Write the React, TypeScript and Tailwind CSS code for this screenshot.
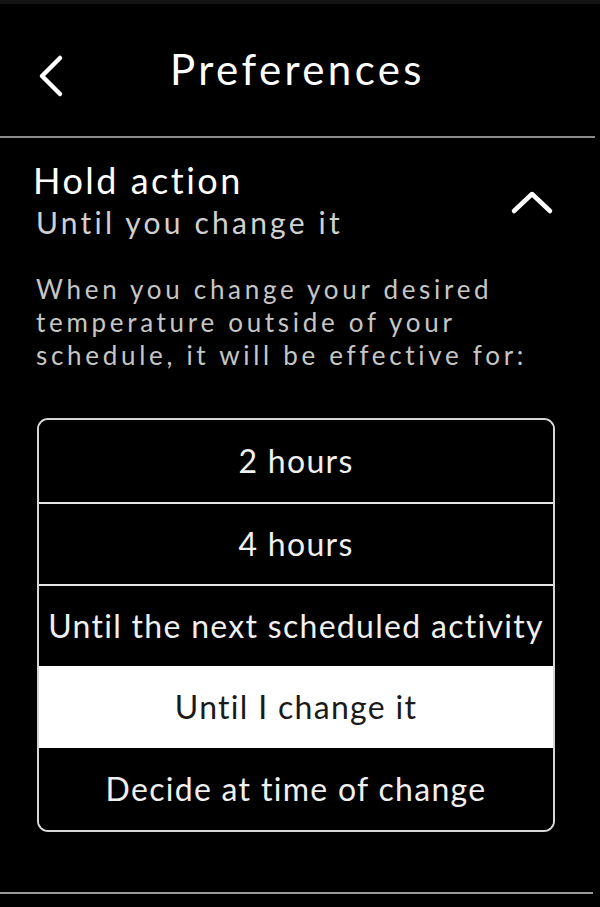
import React, { useState } from "react";

const options = [
  "2 hours",
  "4 hours",
  "Until the next scheduled activity",
  "Until I change it",
  "Decide at time of change",
];

const App: React.FC = () => {
  const [selected, setSelected] = useState(3);

  return (
    <div
      className="w-[600px] h-[907px] bg-black text-white overflow-hidden flex flex-col"
      style={{ fontFamily: "Lato, 'Noto Sans', sans-serif" }}
    >
      <div className="h-[4px] bg-[#141414]" />

      {/* Header */}
      <div className="h-[134px] flex items-center relative border-b-2 border-[#8a8a8a] mr-[5px]">
        <button className="absolute left-[37px] top-[50px] w-[28px] h-[44px]">
          <svg viewBox="0 0 28 44" className="w-full h-full" fill="none">
            <path
              d="M23 4 L5 22 L23 40"
              stroke="white"
              strokeWidth="4.5"
              strokeLinecap="round"
              strokeLinejoin="round"
            />
          </svg>
        </button>
        <h1 className="flex-1 text-center text-[42px] font-normal tracking-[3.4px] pb-[2px]">
          Preferences
        </h1>
      </div>

      {/* Hold action */}
      <div className="flex-1 px-[35px] pt-[20px]">
        <div className="flex items-center justify-between">
          <div>
            <div className="text-[36px] leading-[44px] tracking-[2.5px] ml-[-2px]">Hold action</div>
            <div className="text-[30px] leading-[40px] text-[#d0d0d0] tracking-[3.2px] ml-[1px]">
              Until you change it
            </div>
          </div>
          <svg viewBox="0 0 44 28" className="w-[44px] h-[28px] mr-[11px] mt-[6px]" fill="none">
            <path
              d="M4 22 L22 5 L40 22"
              stroke="white"
              strokeWidth="4.5"
              strokeLinecap="round"
              strokeLinejoin="round"
            />
          </svg>
        </div>

        <p className="mt-[31px] text-[26px] leading-[33px] text-[#c6c6c6] tracking-[3.7px] pl-[1px] whitespace-nowrap">
          When you change your desired
          <br />
          temperature outside of your
          <br />
          schedule, it will be effective for:
        </p>

        <div className="mt-[46px] ml-[2px] w-[518px] border-2 border-[#d6d6d6] rounded-[11px] overflow-hidden">
          {options.map((opt, i) => (
            <button
              key={opt}
              onClick={() => setSelected(i)}
              className={`w-full h-[82px] flex items-center justify-center text-[32px] tracking-[1.3px] whitespace-nowrap ${
                i > 0 && i !== selected && i - 1 !== selected ? "border-t-2 border-[#e6e6e6]" : ""
              } ${selected === i ? "bg-white text-[#1a1a1a]" : "bg-black text-[#f0f0f0]"}`}
            >
              {opt}
            </button>
          ))}
        </div>
      </div>

      <div className="h-[15px] border-t-2 border-[#9a9a9a] mr-[7px]" />
    </div>
  );
};

export default App;
